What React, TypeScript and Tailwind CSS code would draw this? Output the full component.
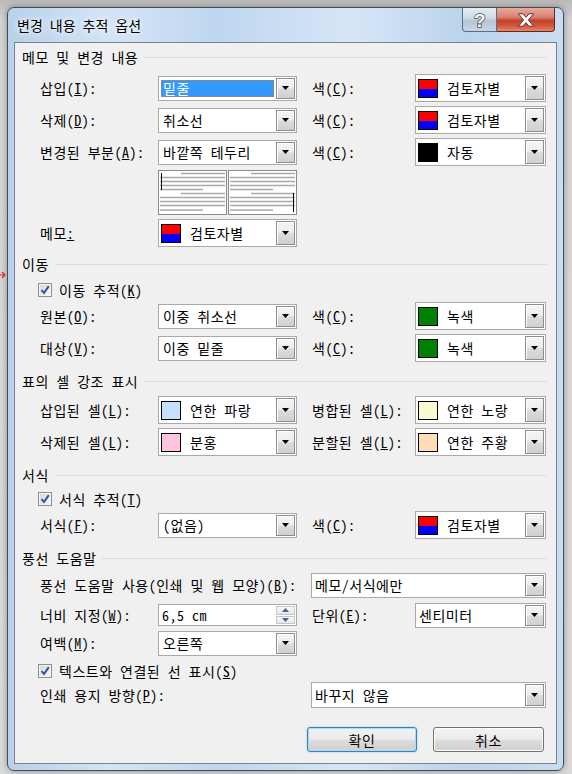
import type { ReactNode } from "react";

function Arrow() {
  return (
    <svg width="7" height="4" viewBox="0 0 7 4">
      <path d="M0 0H7L3.5 4Z" fill="#000" />
    </svg>
  );
}

// 콤보 오른쪽 드롭다운 버튼
function DropButton() {
  return (
    <div className="m-px flex w-[19px] shrink-0 items-center justify-center border border-[#8d8d8d] bg-[linear-gradient(#f5f5f5,#ececec_48%,#dcdcdc_52%,#cfcfcf)] shadow-[inset_1px_1px_0_#fff]">
      <Arrow />
    </div>
  );
}

function Combo({ className, children }: { className: string; children: ReactNode }) {
  return (
    <div className={`flex shrink-0 border border-[#a9a9a9] bg-white ${className}`}>
      <div className="flex min-w-0 flex-1 items-center overflow-hidden whitespace-nowrap">{children}</div>
      <DropButton />
    </div>
  );
}

function ColorCombo({ swatch, label, className = "w-[131px]" }: { swatch: string; label: string; className?: string }) {
  return (
    <Combo className={`h-[28px] ${className}`}>
      <span className={`ml-[2px] h-[19px] w-[20px] shrink-0 border border-black ${swatch}`} />
      <span className="ml-[9px]">{label}</span>
    </Combo>
  );
}

function Header({ children, className = "" }: { children: ReactNode; className?: string }) {
  return (
    <div className={`flex h-[18px] items-center ${className}`}>
      <span className="whitespace-nowrap">{children}</span>
      <div className="ml-[6px] h-px flex-1 bg-[#d3dde6]" />
    </div>
  );
}

function Check() {
  return (
    <span className="flex h-[14px] w-[14px] shrink-0 items-center justify-center border border-[#8e8f8f] bg-[#f4f4f4] p-px">
      <span className="flex h-full w-full items-center justify-center bg-linear-to-br from-[#d6d8dc] to-[#f7f7f7]">
        <svg width="10" height="10" viewBox="0 0 10 10">
          <path d="M1.5 5.2L4 8L8.8 1.2" fill="none" stroke="#33519a" strokeWidth="2" />
        </svg>
      </span>
    </span>
  );
}

// 미리보기 (바깥쪽 테두리)
function Pane({ side }: { side: "left" | "right" }) {
  const rows = [3.5, 7.5, 11.5, 15.5, 19.5, 23.5, 27.5, 31.5, 35.5, 40];
  return (
    <svg width="69" height="45" viewBox="0 0 69 45" className="shrink-0">
      <rect x="0.5" y="0.5" width="68" height="44" fill="#fff" stroke="#8a8a8a" />
      {rows.map((y, i) => {
        const k = i % 5;
        const x1 = k === 0 ? 23 : 2;
        const x2 = k === 4 ? 45 : 67;
        return <line key={i} x1={x1} x2={x2} y1={y} y2={y} stroke="#a9a9a9" strokeWidth="1.6" />;
      })}
      {side === "left" ? (
        <line x1="3.5" x2="3.5" y1="3" y2="20" stroke="#000" />
      ) : (
        <line x1="65.5" x2="65.5" y1="23" y2="42" stroke="#000" />
      )}
    </svg>
  );
}

function SpinBox() {
  return (
    <div className="flex h-[22px] w-[139px] shrink-0 border border-[#a9a9a9] bg-white">
      <div className="flex flex-1 items-center pl-[3px]">6,5 cm</div>
      <div className="m-px flex w-[19px] flex-col gap-px">
        <div className="flex flex-1 items-center justify-center border border-[#c3c7cc] bg-[linear-gradient(#f8f8f8,#e3e6ea)]">
          <svg width="7" height="4" viewBox="0 0 7 4">
            <path d="M0 4H7L3.5 0Z" fill="#4e6287" />
          </svg>
        </div>
        <div className="flex flex-1 items-center justify-center border border-[#c3c7cc] bg-[linear-gradient(#f8f8f8,#e3e6ea)]">
          <svg width="7" height="4" viewBox="0 0 7 4">
            <path d="M0 0H7L3.5 4Z" fill="#4e6287" />
          </svg>
        </div>
      </div>
    </div>
  );
}

const REVIEW = "bg-[linear-gradient(#ff0000_50%,#0000ff_50%)]";

export default function App() {
  return (
    <div className="relative h-[774px] w-[572px] overflow-hidden bg-[linear-gradient(#b9b9b9,#d4d4d4_20px,#dadada)] pl-[7px] pt-[7px] text-[14px] font-light leading-[18px] tracking-[0.5px] text-black [font-family:'Noto_Sans_Mono_CJK_KR','Noto_Sans_CJK_KR','Noto_Sans_CJK_JP',monospace]">
      {/* 왼쪽 끝 빨간 표시 */}
      <svg width="6" height="8" viewBox="0 0 6 8" className="absolute left-0 top-[271px]">
        <path d="M0 4H5M2 1L5 4L2 7" fill="none" stroke="#e02020" strokeWidth="1.2" />
      </svg>

      {/* 창 */}
      <div className="flex h-[764px] w-[557px] flex-col rounded-[7px] border border-[#414c57] bg-[linear-gradient(90deg,#b8d0ea,#d3e4f6_18%,#bfd6ef_38%,#d6e6f7_62%,#bcd3ec_82%,#cadcf1)] px-[6px] pb-[6px] shadow-[0_0_6px_rgba(0,0,0,0.35)]">
        {/* 제목 표시줄 */}
        <div className="flex h-[34px] shrink-0 items-start">
          <div className="mt-[8px] pl-[3px] text-[14px] tracking-normal [text-shadow:0_0_8px_#fff,0_0_4px_#fff]">
            변경 내용 추적 옵션
          </div>
          <div className="ml-auto mr-[2px] flex h-[24px]">
            <div className="flex w-[35px] items-center justify-center rounded-bl-[4px] border border-t-0 border-[#5d6d80] bg-[linear-gradient(#e4ecf5,#cdd9e6_45%,#b5c4d5_55%,#c9d6e4)]">
              <svg width="14" height="20" viewBox="0 0 14 20">
                <text
                  x="7"
                  y="17"
                  textAnchor="middle"
                  fontSize="19"
                  fontWeight="bold"
                  fontFamily="Liberation Sans, sans-serif"
                  fill="#fff"
                  stroke="#4d4d4d"
                  strokeWidth="1.6"
                  paintOrder="stroke"
                >
                  ?
                </text>
              </svg>
            </div>
            <div className="flex w-[58px] items-center justify-center rounded-br-[4px] border border-l-0 border-t-0 border-[#5a2a24] bg-[linear-gradient(#e8aa9c,#d88070_40%,#c2412a_55%,#d65a3e_80%,#e58a6a)]">
              <svg width="18" height="14" viewBox="0 0 18 14">
                <path
                  d="M1.5 0.8H6.2L9 4.4L11.8 0.8H16.5L11.4 7L16.5 13.2H11.8L9 9.6L6.2 13.2H1.5L6.6 7Z"
                  fill="#fff"
                  stroke="#5b3a36"
                  strokeWidth="1"
                  strokeLinejoin="round"
                />
              </svg>
            </div>
          </div>
        </div>

        {/* 본문 */}
        <div className="flex flex-1 flex-col border border-[#76838f] bg-[#f0f0f0] pl-[7px] pr-[9px]">
          <Header className="mt-[5px]">메모 및 변경 내용</Header>

          <div className="mt-[6px] flex h-[32px] items-center pl-[18px]">
            <div className="w-[118px] shrink-0">
              삽입(<u>I</u>):
            </div>
            <Combo className="h-[25px] w-[139px]">
              <div className="ml-[2px] mr-[1px] flex h-[17px] flex-1 items-center border border-dotted border-[#d07a30] bg-[#3399ff] pl-px text-white">
                밑줄
              </div>
            </Combo>
            <div className="ml-[15px] w-[103px] shrink-0">
              색(<u>C</u>):
            </div>
            <ColorCombo swatch={REVIEW} label="검토자별" />
          </div>

          <div className="flex h-[32px] items-center pl-[18px]">
            <div className="w-[118px] shrink-0">
              삭제(<u>D</u>):
            </div>
            <Combo className="h-[25px] w-[139px]">
              <span className="pl-[4px]">취소선</span>
            </Combo>
            <div className="ml-[15px] w-[103px] shrink-0">
              색(<u>C</u>):
            </div>
            <ColorCombo swatch={REVIEW} label="검토자별" />
          </div>

          <div className="flex h-[32px] items-center pl-[18px]">
            <div className="w-[118px] shrink-0 whitespace-nowrap">
              변경된 부분(<u>A</u>):
            </div>
            <Combo className="h-[25px] w-[139px]">
              <span className="pl-[4px]">바깥쪽 테두리</span>
            </Combo>
            <div className="ml-[15px] w-[103px] shrink-0">
              색(<u>C</u>):
            </div>
            <ColorCombo swatch="bg-black" label="자동" />
          </div>

          <div className="mt-[2px] flex h-[45px] gap-px pl-[136px]">
            <Pane side="left" />
            <Pane side="right" />
          </div>

          <div className="mt-[2px] flex h-[32px] items-center pl-[18px]">
            <div className="w-[118px] shrink-0">
              메모<u>:</u>
            </div>
            <ColorCombo swatch={REVIEW} label="검토자별" className="w-[139px]" />
          </div>

          <Header className="mt-[6px]">이동</Header>

          <div className="mt-[7px] flex h-[20px] items-center pl-[16px]">
            <Check />
            <span className="ml-[7px]">
              이동 추적(<u>K</u>)
            </span>
          </div>

          <div className="flex h-[32px] items-center pl-[18px]">
            <div className="w-[118px] shrink-0">
              원본(<u>O</u>):
            </div>
            <Combo className="h-[25px] w-[139px]">
              <span className="pl-[4px]">이중 취소선</span>
            </Combo>
            <div className="ml-[15px] w-[103px] shrink-0">
              색(<u>C</u>):
            </div>
            <ColorCombo swatch="bg-[#008000]" label="녹색" />
          </div>

          <div className="flex h-[32px] items-center pl-[18px]">
            <div className="w-[118px] shrink-0">
              대상(<u>V</u>):
            </div>
            <Combo className="h-[25px] w-[139px]">
              <span className="pl-[4px]">이중 밑줄</span>
            </Combo>
            <div className="ml-[15px] w-[103px] shrink-0">
              색(<u>C</u>):
            </div>
            <ColorCombo swatch="bg-[#008000]" label="녹색" />
          </div>

          <Header className="mt-[8px]">표의 셀 강조 표시</Header>

          <div className="mt-[4px] flex h-[32px] items-center pl-[18px]">
            <div className="w-[118px] shrink-0 whitespace-nowrap">
              삽입된 셀(<u>L</u>):
            </div>
            <ColorCombo swatch="bg-[#c4e1ff]" label="연한 파랑" className="w-[139px]" />
            <div className="ml-[15px] w-[103px] shrink-0 whitespace-nowrap">
              병합된 셀(<u>L</u>):
            </div>
            <ColorCombo swatch="bg-[#f9f9cf]" label="연한 노랑" />
          </div>

          <div className="flex h-[32px] items-center pl-[18px]">
            <div className="w-[118px] shrink-0 whitespace-nowrap">
              삭제된 셀(<u>L</u>):
            </div>
            <ColorCombo swatch="bg-[#ffc3df]" label="분홍" className="w-[139px]" />
            <div className="ml-[15px] w-[103px] shrink-0 whitespace-nowrap">
              분할된 셀(<u>L</u>):
            </div>
            <ColorCombo swatch="bg-[#ffdbb7]" label="연한 주황" />
          </div>

          <Header className="mt-[8px]">서식</Header>

          <div className="mt-[5px] flex h-[20px] items-center pl-[16px]">
            <Check />
            <span className="ml-[7px]">
              서식 추적(<u>T</u>)
            </span>
          </div>

          <div className="flex h-[32px] items-center pl-[18px]">
            <div className="w-[118px] shrink-0">
              서식(<u>F</u>):
            </div>
            <Combo className="h-[25px] w-[139px]">
              <span className="pl-[4px]">(없음)</span>
            </Combo>
            <div className="ml-[15px] w-[103px] shrink-0">
              색(<u>C</u>):
            </div>
            <ColorCombo swatch={REVIEW} label="검토자별" />
          </div>

          <Header className="mt-[8px]">풍선 도움말</Header>

          <div className="mt-[4px] flex h-[28px] items-center pl-[18px]">
            <div className="w-[271px] shrink-0 whitespace-nowrap">
              풍선 도움말 사용(인쇄 및 웹 모양)(<u>B</u>):
            </div>
            <Combo className="h-[25px] w-[235px]">
              <span className="pl-[3px]">메모/서식에만</span>
            </Combo>
          </div>

          <div className="flex h-[32px] items-center pl-[18px]">
            <div className="w-[118px] shrink-0 whitespace-nowrap">
              너비 지정(<u>W</u>):
            </div>
            <SpinBox />
            <div className="ml-[15px] w-[103px] shrink-0">
              단위(<u>E</u>):
            </div>
            <Combo className="h-[25px] w-[131px]">
              <span className="pl-[3px]">센티미터</span>
            </Combo>
          </div>

          <div className="flex h-[24px] items-center pl-[18px]">
            <div className="w-[118px] shrink-0">
              여백(<u>M</u>):
            </div>
            <Combo className="h-[25px] w-[139px]">
              <span className="pl-[4px]">오른쪽</span>
            </Combo>
          </div>

          <div className="mt-[6px] flex h-[20px] items-center pl-[16px]">
            <Check />
            <span className="ml-[7px]">
              텍스트와 연결된 선 표시(<u>S</u>)
            </span>
          </div>

          <div className="flex h-[28px] items-center pl-[18px]">
            <div className="w-[271px] shrink-0 whitespace-nowrap">
              인쇄 용지 방향(<u>P</u>):
            </div>
            <Combo className="h-[26px] w-[235px]">
              <span className="pl-[3px]">바꾸지 않음</span>
            </Combo>
          </div>

          <div className="mt-[18px] flex justify-end gap-[16px] pr-[3px]">
            <button className="flex h-[25px] w-[110px] items-center justify-center rounded-[3px] border border-[#3c7fb1] bg-[linear-gradient(#f2f2f2,#ebebeb_48%,#dddddd_52%,#cfcfcf)] shadow-[inset_0_0_0_1px_#a9dcf6,0_0_2px_#7fc6ef]">
              확인
            </button>
            <button className="flex h-[25px] w-[111px] items-center justify-center rounded-[3px] border border-[#707070] bg-[linear-gradient(#f2f2f2,#ebebeb_48%,#dddddd_52%,#cfcfcf)] shadow-[inset_0_0_0_1px_#fcfcfc]">
              취소
            </button>
          </div>
        </div>
      </div>
    </div>
  );
}
